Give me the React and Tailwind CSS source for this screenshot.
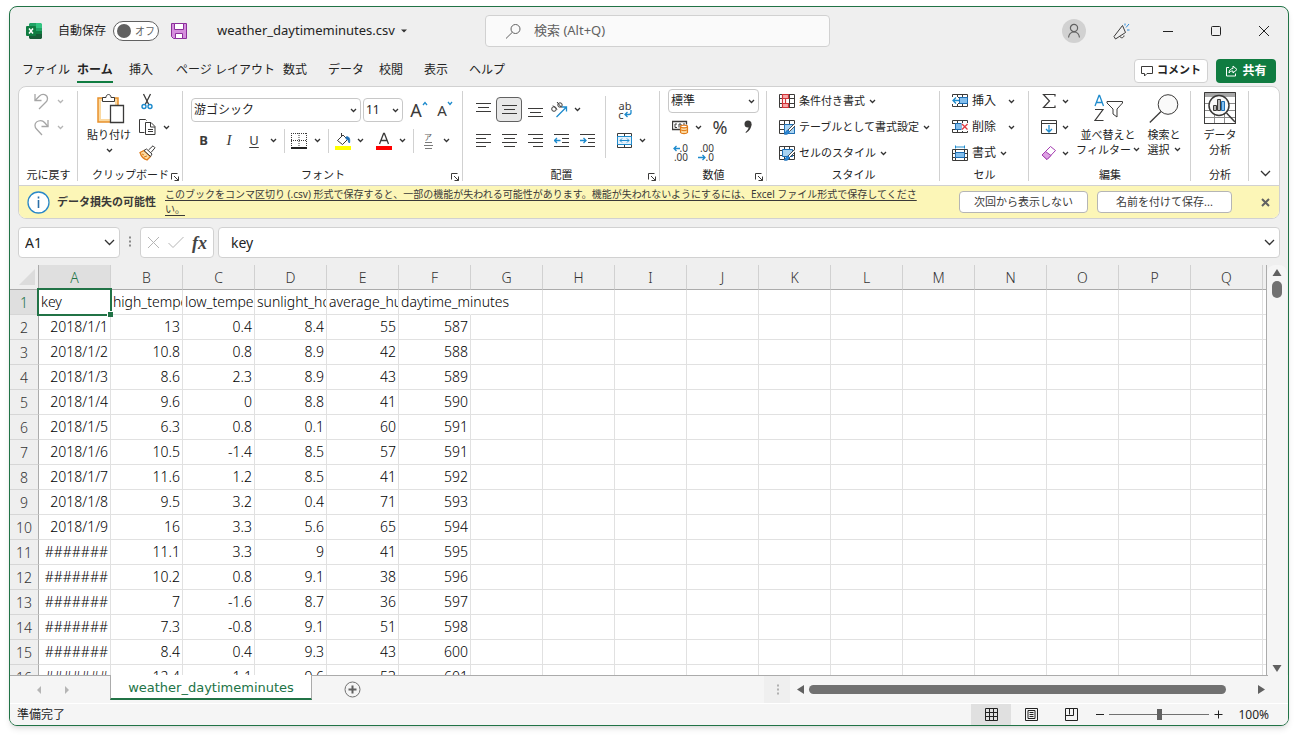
import React, { useState } from "react";
import clsx from "clsx";

const COLUMNS = "ABCDEFGHIJKLMNOPQ".split("");

const ROWS = [
  ["key", "high_temperature", "low_temperature", "sunlight_hours", "average_humidity", "daytime_minutes"],
  ["2018/1/1", "13", "0.4", "8.4", "55", "587"],
  ["2018/1/2", "10.8", "0.8", "8.9", "42", "588"],
  ["2018/1/3", "8.6", "2.3", "8.9", "43", "589"],
  ["2018/1/4", "9.6", "0", "8.8", "41", "590"],
  ["2018/1/5", "6.3", "0.8", "0.1", "60", "591"],
  ["2018/1/6", "10.5", "-1.4", "8.5", "57", "591"],
  ["2018/1/7", "11.6", "1.2", "8.5", "41", "592"],
  ["2018/1/8", "9.5", "3.2", "0.4", "71", "593"],
  ["2018/1/9", "16", "3.3", "5.6", "65", "594"],
  ["#######", "11.1", "3.3", "9", "41", "595"],
  ["#######", "10.2", "0.8", "9.1", "38", "596"],
  ["#######", "7", "-1.6", "8.7", "36", "597"],
  ["#######", "7.3", "-0.8", "9.1", "51", "598"],
  ["#######", "8.4", "0.4", "9.3", "43", "600"],
  ["#######", "12.4", "1.1", "9.6", "53", "601"],
];

const Icon = ({ w = 16, h = 16, className, children }) => (
  <svg
    width={w}
    height={h}
    viewBox={`0 0 ${w} ${h}`}
    fill="none"
    stroke="#3b3a39"
    className={clsx("shrink-0", className)}
    aria-hidden="true"
  >
    {children}
  </svg>
);

const Chevron = ({ className, color = "#333" }) => (
  <Icon w={7} h={5} className={className}>
    <path d="M1 1l2.5 2.5L6 1" stroke={color} strokeWidth="1.3" />
  </Icon>
);

const ChevronLarge = ({ className }) => (
  <Icon w={11} h={7} className={className}>
    <path d="M1 1l4.5 4.5L10 1" stroke="#333" strokeWidth="1.3" />
  </Icon>
);

const Btn = ({ label, className, children }) => (
  <button type="button" aria-label={label} className={clsx("flex shrink-0 items-center justify-center", className)}>
    {children}
  </button>
);

const More = ({ label, color, className }) => (
  <Btn label={label} className={clsx("h-5 w-[14px]", className)}>
    <Chevron color={color} />
  </Btn>
);

const Divider = () => <div className="mx-1 h-6 w-px shrink-0 bg-[#d1d1d1]" />;

/* ---------- title bar ---------- */

const ExcelLogo = () => (
  <Icon w={16} h={16} className="ml-4">
    <g stroke="none">
      <path d="M4 0h6v5H3V1z" fill="#21a366" />
      <path d="M10 0h5l1 1v4h-6z" fill="#33c481" />
      <path d="M3 5h7v6H3z" fill="#107c41" />
      <path d="M10 5h6v3h-6z" fill="#21a366" />
      <path d="M10 8h6v3h-6z" fill="#107c41" />
      <path d="M3 11h13v4l-1 1H4l-1-1z" fill="#185c37" />
      <rect x="0" y="3" width="10" height="10" rx="1" fill="#107c41" />
    </g>
    <path d="M3 5.5l4 5M7 5.5l-4 5" stroke="#fff" strokeWidth="1.5" />
  </Icon>
);

const TitleBar = () => {
  const [autoSave, setAutoSave] = useState(false);

  return (
    <header className="flex h-[48px] shrink-0 items-center">
      <div className="flex w-[475px] shrink-0 items-center">
        <ExcelLogo />
        <label className="ml-4 flex items-center gap-[7px] text-xs">
          自動保存
          <input
            type="checkbox"
            className="sr-only"
            checked={autoSave}
            onChange={(e) => setAutoSave(e.target.checked)}
          />
          <span className="flex h-5 w-[46px] items-center gap-1 rounded-full border border-[#616161] bg-white px-[3px]">
            <span className="h-[14px] w-[14px] shrink-0 rounded-full bg-[#616161]" />
            <span className="whitespace-nowrap text-[10px] leading-none text-[#616161]">オフ</span>
          </span>
        </label>
        <Btn label="上書き保存" className="ml-3">
          <Icon>
            <path d="M.5.5h15v15H2.5l-2-2z" fill="#d58fdd" stroke="#8b2f9b" />
            <path d="M3.5.5h9v6h-9z" fill="#fff" stroke="#8b2f9b" />
            <path d="M4.5 10.5h7v5h-7z" fill="#fff" stroke="#8b2f9b" />
          </Icon>
        </Btn>
        <button type="button" className="ml-[30px] flex items-center gap-[6px] text-[13px]">
          weather_daytimeminutes.csv
          <Icon w={6} h={4}>
            <path d="M0 .5h6L3 3.5z" fill="#333" stroke="none" />
          </Icon>
        </button>
      </div>
      <label className="flex h-8 w-[345px] items-center gap-3 rounded border border-[#d1d1d1] bg-[#fafafa] pl-[19px]">
        <Icon w={17} h={17}>
          <circle cx="10.5" cy="6" r="4.5" stroke="#616161" />
          <path d="M7.3 9.3L1 15.5" stroke="#616161" />
        </Icon>
        <input
          aria-label="検索"
          placeholder="検索 (Alt+Q)"
          className="min-w-0 flex-1 bg-transparent text-[13px] outline-none placeholder:text-[#616161]"
        />
      </label>
      <div className="ml-auto flex items-center pr-[18px]">
        <Btn label="アカウント" className="h-6 w-6 rounded-full bg-[#d1d1d1]">
          <Icon w={14} h={16}>
            <circle cx="7" cy="5" r="3.6" stroke="#616161" strokeWidth="1.2" />
            <path d="M1.5 14.5c.5-3.5 2.5-5.5 5.5-5.5s5 2 5.5 5.5" stroke="#616161" strokeWidth="1.2" />
          </Icon>
        </Btn>
        <Btn label="近日公開の機能" className="ml-[27px]">
          <Icon w={17} h={17}>
            <path d="M9.5 2.5L1 13.5l1.5 2.5 10-6.5z" strokeLinejoin="round" />
            <path d="M7 13.5c.5 2 4 1.5 4-1" />
            <path d="M12 2.5V.5M13 4.5l3-3.5M14 7h2.5" stroke="#2b88d8" />
          </Icon>
        </Btn>
        <Btn label="最小化" className="ml-8">
          <Icon w={12} h={12}>
            <path d="M1 6.5h10" stroke="#222" />
          </Icon>
        </Btn>
        <Btn label="最大化" className="ml-9">
          <Icon w={12} h={12}>
            <rect x="1.5" y="1.5" width="9" height="9" rx="1" stroke="#222" />
          </Icon>
        </Btn>
        <Btn label="閉じる" className="ml-9">
          <Icon w={12} h={12}>
            <path d="M1 1l10 10M11 1L1 11" stroke="#222" />
          </Icon>
        </Btn>
      </div>
    </header>
  );
};

/* ---------- tabs ---------- */

const TABS = [
  { name: "ファイル", width: "w-[55px]" },
  { name: "ホーム", width: "w-[52px]", active: true },
  { name: "挿入", width: "w-[47px]" },
  { name: "ページ レイアウト", width: "w-[107px]" },
  { name: "数式", width: "w-[45px]" },
  { name: "データ", width: "w-[51px]" },
  { name: "校閲", width: "w-[45px]" },
  { name: "表示", width: "w-[45px]" },
  { name: "ヘルプ", width: "w-[45px]" },
];

const TabBar = () => (
  <nav className="flex h-[31px] shrink-0 items-center px-3">
    {TABS.map((tab) => (
      <div key={tab.name} className={clsx("flex shrink-0", tab.width)}>
        <button
          type="button"
          className={clsx(
            "h-6 whitespace-nowrap border-b-2 pt-px text-xs",
            tab.active ? "border-[#107c41] font-bold" : "border-transparent"
          )}
        >
          {tab.name}
        </button>
      </div>
    ))}
    <button
      type="button"
      className="ml-auto flex h-6 w-[74px] items-center justify-center gap-1 rounded border border-[#d1d1d1] bg-white text-[11px] font-bold"
    >
      <Icon w={12} h={12}>
        <path d="M.5 1.5h11v7H6L3.5 11V8.5h-3z" />
      </Icon>
      コメント
    </button>
    <button
      type="button"
      className="ml-2 flex h-6 w-[60px] items-center justify-center gap-1 rounded bg-[#107c41] text-xs font-bold text-white"
    >
      <Icon w={13} h={13}>
        <path d="M4 3.5H1.5V12h9V9.5" stroke="#fff" />
        <path d="M4 9c0-3 2-4.5 4-4.5V2l4 3.5L8 9V7C6 7 5 7.5 4 9z" stroke="#fff" />
      </Icon>
      共有
    </button>
  </nav>
);

/* ---------- ribbon ---------- */

const Launcher = ({ label }) => (
  <Btn label={label} className="absolute bottom-[3px] right-[3px]">
    <Icon w={10} h={10}>
      <path d="M1.5 7.5v-6h6M4 4l4.5 4.5M8.5 4.5v4h-4" />
    </Icon>
  </Btn>
);

const Group = ({ title, width, launcher, children }) => (
  <section className={clsx("relative flex shrink-0 flex-col pt-px", width)}>
    <div className="absolute bottom-1 right-0 top-1 w-px bg-[#d1d1d1]" />
    <div className="flex h-[78px]">{children}</div>
    <h2 className="flex h-[18px] items-center justify-center text-[11px]">{title}</h2>
    {launcher && <Launcher label={`${title}の設定`} />}
  </section>
);

const Lines = ({ rows }) => (
  <Icon w={15} h={15}>
    {rows.map(([x1, x2, y]) => (
      <path key={y} d={`M${x1} ${y}.5H${x2}`} />
    ))}
  </Icon>
);

const UndoGroup = () => (
  <Group title="元に戻す" width="w-[59px]">
    <div className="flex flex-col pl-[14px]">
      <div className="flex h-[26px] items-center gap-[3px]">
        <Btn label="元に戻す">
          <Icon w={17} h={17}>
            <path d="M2 1v6.500h6.500" stroke="#a6a6a6" strokeWidth="1.3" />
            <path d="M2 7.500L6.500 3c3-3 8-1.500 8 2.500 0 1.500-.5 2.500-1.500 3.500L6 16" stroke="#a6a6a6" strokeWidth="1.3" />
          </Icon>
        </Btn>
        <More label="元に戻す履歴" color="#b5b5b5" />
      </div>
      <div className="flex h-[26px] items-center gap-[3px]">
        <Btn label="やり直し">
          <Icon w={17} h={17}>
            <path d="M15 1v6.500H8.500" stroke="#a6a6a6" strokeWidth="1.3" />
            <path d="M15 7.500L11.500 3.500c-3-3.500-9.500-1.500-9.500 3 0 1.500.5 2.500 1.500 3.500L9 16" stroke="#a6a6a6" strokeWidth="1.3" />
          </Icon>
        </Btn>
        <More label="やり直し履歴" color="#b5b5b5" />
      </div>
    </div>
  </Group>
);

const ClipboardGroup = () => (
  <Group title="クリップボード" width="w-[105px]" launcher>
    <button type="button" className="ml-[9px] flex w-11 flex-col items-center pt-[5px] text-[11px] leading-[15px]">
      <Icon w={30} h={32} className="ml-1">
        <path d="M2 5h20v24H2z" fill="#fbd9a0" stroke="#e8912d" strokeWidth="1.5" />
        <path d="M5 8h14v18H5z" fill="#fff" stroke="none" />
        <path d="M6.500 8.500v-4h3.500c0-4 5-4 5 0h3.500v4z" fill="#fff" />
        <path d="M14.500 12.500h13v17h-13z" fill="#fff" strokeWidth="1.3" />
      </Icon>
      <span className="mt-[2px] whitespace-nowrap">貼り付け</span>
      <Chevron className="mt-[6px]" />
    </button>
    <div className="ml-2 flex flex-col">
      <div className="flex h-[26px] items-center">
        <Btn label="切り取り" className="w-4">
          <Icon w={14} h={17}>
            <path d="M3.500 1l5.500 11M10.500 1L5 12" strokeWidth="1.3" />
            <circle cx="4" cy="13.500" r="2" stroke="#1e8bcd" strokeWidth="1.4" />
            <circle cx="10" cy="13.500" r="2" stroke="#1e8bcd" strokeWidth="1.4" />
          </Icon>
        </Btn>
      </div>
      <div className="flex h-[26px] items-center gap-[3px]">
        <Btn label="コピー">
          <Icon w={17} h={16}>
            <path d="M5.500 13.500h-5V.5h6l1 1" />
            <path d="M6.500 3.500H12l4 4v8H6.500z" fill="#fff" />
            <path d="M11.500 3.500V8H16M9 10.500h5M9 12.500h5" />
          </Icon>
        </Btn>
        <More label="コピーのオプション" />
      </div>
      <div className="flex h-[26px] items-center">
        <Btn label="書式のコピー">
          <Icon w={17} h={16}>
            <path d="M1 7.500l4-2 6.500 6L8 15c-3-1-6-4-7-7.500z" fill="#fbd9a0" stroke="#e07b1a" strokeWidth="1.3" />
            <path d="M3 9l2 1M5 12l3-1" stroke="#e07b1a" />
            <path d="M5 5.500L7.500 4l5.500 5-1.500 2.500zM9.500 5L14 .8l2 2L12 7.500" fill="#fff" />
          </Icon>
        </Btn>
      </div>
    </div>
  </Group>
);

const SelectBox = ({ label, value, className }) => (
  <div className={clsx("relative flex h-6 shrink-0 items-center rounded border border-[#c8c8c8] bg-white", className)}>
    <select aria-label={label} className="h-full w-full appearance-none bg-transparent pl-[2px] text-xs outline-none">
      <option>{value}</option>
    </select>
    <Chevron className="pointer-events-none absolute right-[3px] top-[9px]" />
  </div>
);

const FontGroup = () => (
  <Group title="フォント" width="w-[280px]" launcher>
    <div className="flex flex-col pl-2 pt-[6px]">
      <div className="flex h-[31px] items-center">
        <SelectBox label="フォント名" value="游ゴシック" className="w-[170px]" />
        <SelectBox label="フォント サイズ" value="11" className="ml-[2px] w-10" />
        <Btn label="フォント サイズの拡大" className="ml-[6px] w-5 items-start text-lg leading-5 text-[#3b3a39]">
          A
          <Icon w={6} h={5} className="mt-px">
            <path d="M1 4l2-2.500L5 4" stroke="#1e8bcd" strokeWidth="1.3" />
          </Icon>
        </Btn>
        <Btn label="フォント サイズの縮小" className="ml-[6px] w-5 items-start text-[15px] leading-5 text-[#3b3a39]">
          A
          <Icon w={6} h={5} className="mt-px">
            <path d="M1 1l2 2.500L5 1" stroke="#1e8bcd" strokeWidth="1.3" />
          </Icon>
        </Btn>
      </div>
      <div className="flex h-[31px] items-center text-[13px] text-[#3b3a39]">
        <Btn label="太字" className="w-[25px] font-bold">B</Btn>
        <Btn label="斜体" className="w-[26px] font-['Liberation_Serif',serif] text-[15px] italic">I</Btn>
        <Btn label="下線" className="w-6 underline underline-offset-2">U</Btn>
        <More label="下線の種類" />
        <Divider />
        <Btn label="罫線" className="w-5">
          <Icon>
            <path d="M0 .5h16M0 7.500h16M.5 0v15M8 0v15M15.500 0v15" strokeDasharray="1 1" />
            <path d="M0 15h16" strokeWidth="2" stroke="#222" />
          </Icon>
        </Btn>
        <More label="罫線の種類" className="ml-px" />
        <Divider />
        <Btn label="塗りつぶしの色" className="w-5">
          <Icon w={17} h={18}>
            <path d="M2.500 8.500L8 3l4.500 4.500-5 5zM6.500 1v4" strokeLinejoin="round" />
            <path d="M11 5c2.500-1 4.500 1 3.500 6l-1-1c0-2-1-3-2.500-3z" fill="#1e6fb5" stroke="#1e6fb5" strokeWidth=".8" />
            <path d="M0 14h16v4H0z" fill="#ff0" stroke="none" />
          </Icon>
        </Btn>
        <More label="塗りつぶしの色の選択" />
        <Btn label="フォントの色" className="ml-[7px] w-5">
          <Icon w={16} h={18}>
            <path d="M3.500 12L7.600 1.500h.8L12.500 12M5 8.500h6" strokeWidth="1.3" />
            <path d="M0 14h16v4H0z" fill="#f00" stroke="none" />
          </Icon>
        </Btn>
        <More label="フォントの色の選択" className="ml-px" />
        <Divider />
        <Btn label="ふりがな" className="w-5 flex-col text-[8px] leading-[9px] text-[#616161]">
          <span className="font-['Noto_Sans_CJK_JP',sans-serif]">ア</span>
          <Icon w={9} h={8}>
            <path d="M1 1.500h7M0 4.500h9M1 7.500h7" stroke="#7a7a7a" />
          </Icon>
        </Btn>
        <More label="ふりがなの設定" className="ml-px" />
      </div>
    </div>
  </Group>
);

const AlignGroup = () => (
  <Group title="配置" width="w-[197px]" launcher>
    <div className="flex w-[136px] flex-col pl-[7px] pt-[6px]">
      <div className="flex h-[31px] items-center">
        <Btn label="上揃え" className="w-[26px]">
          <Lines rows={[[0, 15, 1], [2, 13, 5], [0, 15, 9]]} />
        </Btn>
        <Btn label="上下中央揃え" className="h-[25px] w-[26px] rounded border border-[#616161] bg-[#e8e8e8]">
          <Lines rows={[[0, 15, 3], [2, 13, 7], [0, 15, 11]]} />
        </Btn>
        <Btn label="下揃え" className="w-[26px]">
          <Lines rows={[[0, 15, 6], [2, 13, 10], [0, 15, 14]]} />
        </Btn>
        <Btn label="方向" className="w-[22px]">
          <Icon w={18} h={18}>
            <path d="M6.500 16L16 6.500M12 6h4.500v4.500" stroke="#1e8bcd" strokeWidth="1.3" />
            <circle cx="4" cy="8" r="2.300" />
            <path d="M3 4.500l4 4M7 1l4.500 5.500" />
            <circle cx="10" cy="4" r="2.200" />
          </Icon>
        </Btn>
        <More label="方向の選択" />
      </div>
      <div className="flex h-[31px] items-center">
        <Btn label="左揃え" className="w-[26px]">
          <Lines rows={[[0, 15, 1], [0, 10, 5], [0, 15, 9], [0, 10, 13]]} />
        </Btn>
        <Btn label="中央揃え" className="w-[26px]">
          <Lines rows={[[0, 15, 1], [2, 13, 5], [0, 15, 9], [2, 13, 13]]} />
        </Btn>
        <Btn label="右揃え" className="w-[26px]">
          <Lines rows={[[0, 15, 1], [5, 15, 5], [0, 15, 9], [5, 15, 13]]} />
        </Btn>
        <Btn label="インデントを減らす" className="w-[26px]">
          <Icon w={15} h={15}>
            <path d="M0 1.500h15M8 5.500h7M8 9.500h7M0 13.500h15" />
            <path d="M6.500 7.500h-6M3 5L.5 7.500 3 10" stroke="#1e8bcd" strokeWidth="1.3" />
          </Icon>
        </Btn>
        <Btn label="インデントを増やす" className="w-[26px]">
          <Icon w={15} h={15}>
            <path d="M0 1.500h15M8 5.500h7M8 9.500h7M0 13.500h15" />
            <path d="M0 7.500h6M3.500 5L6 7.500 3.500 10" stroke="#1e8bcd" strokeWidth="1.3" />
          </Icon>
        </Btn>
      </div>
    </div>
    <div className="ml-[6px] mt-2 h-[62px] w-px bg-[#d1d1d1]" />
    <div className="flex flex-col pl-[7px] pt-[6px]">
      <div className="flex h-[31px] items-center">
        <Btn label="折り返して全体を表示する" className="w-6 flex-col text-[11px] leading-[9px] text-[#3b3a39]">
          <span>ab</span>
          <span className="flex items-center">
            c
            <Icon w={8} h={8}>
              <path d="M7 0v2.500c0 1.500-1 2-2 2H1M3.500 2L1 4.500 3.500 7" stroke="#1e8bcd" strokeWidth="1.3" />
            </Icon>
          </span>
        </Btn>
      </div>
      <div className="flex h-[31px] items-center">
        <Btn label="セルを結合して中央揃え" className="w-[22px]">
          <Icon w={15} h={15}>
            <path d="M.5.5h14v14H.5zM7.500 0v3M7.500 12v3" />
            <path d="M.5 3.500h14v8H.5z" fill="#e5f1fb" stroke="#1e8bcd" />
            <path d="M3 7.500h9M5 5.500l-2 2 2 2M10 5.500l2 2-2 2" stroke="#1e8bcd" />
          </Icon>
        </Btn>
        <More label="結合の種類" />
      </div>
    </div>
  </Group>
);

const NumberGroup = () => (
  <Group title="数値" width="w-[107px]" launcher>
    <div className="flex flex-col pl-2">
      <div className="flex h-[26px] items-center">
        <SelectBox label="表示形式" value="標準" className="w-[91px]" />
      </div>
      <div className="flex h-[26px] items-center">
        <Btn label="通貨表示形式" className="ml-1">
          <Icon w={17} h={16}>
            <path d="M8 10.500H.5v-8h14v3" strokeWidth="1.3" />
            <path d="M5 5H3v3.500h2M7 8.500V5h2v3M11 5h2" />
            <path d="M8.500 7.500v6c1 1.500 6 1.500 7 0v-6" fill="#fbd9a0" stroke="#e07b1a" strokeWidth="1.2" />
            <ellipse cx="12" cy="7.500" rx="3.500" ry="1.300" fill="#fff" stroke="#e07b1a" strokeWidth="1.2" />
            <path d="M8.500 10.500c1 1.500 6 1.500 7 0" stroke="#e07b1a" />
          </Icon>
        </Btn>
        <More label="通貨の選択" className="ml-[2px]" />
        <Btn label="パーセント スタイル" className="ml-[3px] w-6 text-lg leading-none text-[#3b3a39]">%</Btn>
        <Btn label="桁区切りスタイル" className="ml-3">
          <Icon w={9} h={14}>
            <circle cx="4" cy="4" r="3.500" fill="#3b3a39" stroke="none" />
            <path d="M7.500 4c0 4-2 7-5.500 9l-.5-.8C4 10 5 8 4.500 6z" fill="#3b3a39" stroke="none" />
          </Icon>
        </Btn>
      </div>
      <div className="flex h-[26px] items-center gap-[10px] pl-1 text-[10px] leading-[9px] text-[#3b3a39]">
        <Btn label="小数点以下の表示桁数を増やす" className="w-4 flex-col items-end">
          <span className="flex items-center">
            <Icon w={7} h={7}>
              <path d="M7 3.500H1M3.500 1L1 3.500 3.500 6" stroke="#1e8bcd" strokeWidth="1.3" />
            </Icon>
            .0
          </span>
          <span>.00</span>
        </Btn>
        <Btn label="小数点以下の表示桁数を減らす" className="w-4 flex-col items-end">
          <span>.00</span>
          <span className="flex items-center">
            <Icon w={8} h={7}>
              <path d="M0 3.500h7M4.500 1L7 3.500 4.500 6" stroke="#1e8bcd" strokeWidth="1.3" />
            </Icon>
            .0
          </span>
        </Btn>
      </div>
    </div>
  </Group>
);

const Table16 = ({ children }) => (
  <Icon>
    <path d="M.5 1.500h15v13H.5zM.5 5.500h15M.5 10.500h15M5.500 1.500v13M10.500 1.500v13" />
    {children}
  </Icon>
);

const Brush = () => (
  <>
    <path d="M15.500 4.500L9 11l1.500 1.500L16 7" fill="#fff" strokeWidth=".9" />
    <path d="M9 11c-2 0-2 3-4 4 2 1 5 0 5.500-2.500z" fill="#2b88d8" stroke="#1e6fb5" strokeWidth=".8" />
  </>
);

const StylesGroup = () => (
  <Group title="スタイル" width="w-[173px]">
    <div className="flex flex-col pl-3 text-[11px]">
      <button type="button" className="flex h-[26px] items-center whitespace-nowrap">
        <Table16>
          <path d="M3.500 1.500h6v4h-6zM3.500 10.500h6v4h-6z" fill="#f7a8a8" stroke="#d13438" strokeWidth="1.2" />
          <path d="M3.500 5.500h3v5h-3z" fill="#fff" stroke="#d13438" strokeWidth="1.2" />
        </Table16>
        <span className="ml-1">条件付き書式</span>
        <Chevron className="ml-1" />
      </button>
      <button type="button" className="flex h-[26px] items-center whitespace-nowrap">
        <Table16>
          <path d="M5.500 5.500h10v9h-10z" fill="#a9d3f2" stroke="#1e6fb5" />
          <Brush />
        </Table16>
        <span className="ml-1">テーブルとして書式設定</span>
        <Chevron className="ml-1" />
      </button>
      <button type="button" className="flex h-[26px] items-center whitespace-nowrap">
        <Table16>
          <path d="M3.500 4.500h10v7h-10z" fill="#a9d3f2" stroke="#1e6fb5" />
          <Brush />
        </Table16>
        <span className="ml-1">セルのスタイル</span>
        <Chevron className="ml-1" />
      </button>
    </div>
  </Group>
);

const CellsGroup = () => (
  <Group title="セル" width="w-[89px]">
    <div className="flex flex-col pl-3 text-xs">
      <button type="button" className="flex h-[26px] items-center">
        <Icon>
          <path d="M.5 4V1.500h15v12H.5V11M5.500 1.500v3M10.500 1.500v12M5.500 10.500v3M.5 4.500h15M.5 10.500h15" />
          <path d="M7.500 4.500h8v6h-8z" fill="#83beec" stroke="#1e6fb5" />
          <path d="M0 4h6v7H0z" fill="#fff" stroke="none" />
          <path d="M7 7.500H1M4 4.500l-3 3 3 3" stroke="#1e8bcd" strokeWidth="1.3" />
        </Icon>
        <span className="ml-1">挿入</span>
        <Chevron className="ml-3" />
      </button>
      <button type="button" className="flex h-[26px] items-center">
        <Icon>
          <path d="M.5 5V1.500h15V4M5.500 1.500v3M10.500 1.500v3M.5 10v3.500h15V12M5.500 10.500v3M10.500 10.500v3M.5 4.500h15M.5 10.500h15" />
          <path d="M3.500 4.500h6v6h-6z" fill="#83beec" stroke="#1e6fb5" />
          <path d="M9.500 4h7v8h-7z" fill="#fff" stroke="none" />
          <path d="M10 5l5.500 5.500M15.500 5L10 10.500" stroke="#e0393e" strokeWidth="1.3" />
        </Icon>
        <span className="ml-1">削除</span>
        <Chevron className="ml-3" />
      </button>
      <button type="button" className="flex h-[26px] items-center">
        <Icon>
          <path d="M.5 4.500h15v11H.5zM.5 8.500h15M.5 12.500h15M3.500 4.500v11M12.500 4.500v11" />
          <path d="M3.500 7.500h9v5h-9z" fill="#83beec" stroke="#1e6fb5" />
          <path d="M3.500 2h9M3.500.5v3M12.500.5v3" stroke="#1e8bcd" />
        </Icon>
        <span className="ml-1">書式</span>
        <Chevron className="ml-1" />
      </button>
    </div>
  </Group>
);

const EditGroup = () => (
  <Group title="編集" width="w-[162px]">
    <div className="flex flex-col pl-3">
      <div className="flex h-[26px] items-center">
        <Btn label="オート SUM">
          <Icon w={17} h={16}>
            <path d="M14 3.500v-2H2.500L8.500 8l-6 6.500H14v-2" strokeWidth="1.2" />
          </Icon>
        </Btn>
        <More label="集計方法" />
      </div>
      <div className="flex h-[26px] items-center">
        <Btn label="フィル">
          <Icon w={17} h={15}>
            <path d="M.5.5h15v13H.5zM.5 3.500h15" />
            <path d="M8 5v7M5 9l3 3 3-3" stroke="#1e8bcd" strokeWidth="1.3" />
          </Icon>
        </Btn>
        <More label="フィルの種類" />
      </div>
      <div className="flex h-[26px] items-center">
        <Btn label="クリア">
          <Icon w={17} h={16}>
            <path d="M9.500 1.500l5 4-8.500 9-5-4.500z" fill="#fff" stroke="#a33bb0" />
            <path d="M4.500 6.500l5.500 4-4 4-5-4.500z" fill="#dda3e3" stroke="#a33bb0" />
          </Icon>
        </Btn>
        <More label="クリアの種類" />
      </div>
    </div>
    <button type="button" className="ml-[3px] flex w-[66px] flex-col items-center whitespace-nowrap pt-[6px] text-[11px] leading-[15px]">
      <Icon w={31} h={31}>
        <path d="M2 12L6 1.500h.6L10.500 12M3.500 8.500h6" stroke="#1e8bcd" strokeWidth="1.3" />
        <path d="M2 15.500h8L2 26.500h8.500" strokeWidth="1.2" />
        <path d="M14 7.500h15.500V9L24 15v8l-4-3v-5l-6-6z" fill="#fff" />
      </Icon>
      <span className="mt-[2px]">並べ替えと</span>
      <span className="flex items-center gap-[2px]">
        フィルター
        <Chevron />
      </span>
    </button>
    <button type="button" className="flex w-[46px] flex-col items-center whitespace-nowrap pt-[6px] text-[11px] leading-[15px]">
      <Icon w={31} h={31}>
        <circle cx="19" cy="10.500" r="9.800" fill="#fafafa" />
        <path d="M12 17.500L.8 28.500" strokeWidth="1.3" />
      </Icon>
      <span className="mt-[2px]">検索と</span>
      <span className="flex items-center gap-1">
        選択
        <Chevron />
      </span>
    </button>
  </Group>
);

const AnalysisGroup = () => (
  <Group title="分析" width="w-[58px]">
    <button type="button" className="flex w-full flex-col items-center pt-1 text-[11px] leading-[15px]">
      <Icon w={32} h={32}>
        <path d="M.5.5h31v31H.5z" fill="#fff" />
        <path d="M0 0h32v5H0z" fill="#a8a8a8" stroke="none" />
        <path d="M0 11.500h32M0 18.500h32M0 25.500h32M10.500 5v27M20.500 5v27" stroke="#8a8a8a" />
        <path d="M.5.5h31v31H.5z" />
        <circle cx="15" cy="13.500" r="10" fill="#fafafa" strokeWidth="1.5" />
        <path d="M9.500 13.500h3v5h-3zM13.500 7.500h3v11h-3z" fill="#b5b5b5" />
        <path d="M17.500 9.500h3v9h-3z" fill="#83beec" stroke="#1e6fb5" />
        <path d="M22.500 21L31 30" strokeWidth="1.5" />
      </Icon>
      <span className="mt-[3px]">データ</span>
      <span>分析</span>
    </button>
  </Group>
);

const MessageBar = () => (
  <div className="flex h-[33px] items-center border-t border-[#d1d1d1] bg-[#fcf6b7] px-2 text-[#3b3a39]">
    <Icon w={23} h={23}>
      <circle cx="11.500" cy="11.500" r="10.500" fill="#fff" stroke="#2b88c8" strokeWidth="1.3" />
      <path d="M11.500 9v8M11.500 5.500v2" stroke="#2b6fa8" strokeWidth="1.6" />
    </Icon>
    <strong className="ml-[7px] shrink-0 text-[11px]">データ損失の可能性</strong>
    <a href="#save" className="ml-[9px] min-w-0 flex-1 text-[10px] leading-[15px] underline underline-offset-2">
      このブックをコンマ区切り (.csv) 形式で保存すると、一部の機能が失われる可能性があります。機能が失われないようにするには、Excel ファイル形式で保存してください。
    </a>
    <button type="button" className="ml-8 h-[22px] w-[129px] shrink-0 rounded border border-[#b5b5b5] bg-white text-[11px]">
      次回から表示しない
    </button>
    <button type="button" className="ml-[9px] h-[22px] w-[135px] shrink-0 rounded border border-[#b5b5b5] bg-white text-[11px]">
      名前を付けて保存...
    </button>
    <Btn label="メッセージを閉じる" className="ml-[29px] mr-px">
      <Icon w={9} h={9}>
        <path d="M1 1l7 7M8 1L1 8" stroke="#616161" strokeWidth="2" />
      </Icon>
    </Btn>
  </div>
);

const Ribbon = () => (
  <div className="mx-2 shrink-0 overflow-hidden rounded-lg border border-[#d1d1d1] bg-white">
    <div className="flex h-[98px]">
      <UndoGroup />
      <ClipboardGroup />
      <FontGroup />
      <AlignGroup />
      <NumberGroup />
      <StylesGroup />
      <CellsGroup />
      <EditGroup />
      <AnalysisGroup />
      <Btn label="リボンを折りたたむ" className="ml-auto mr-2 self-end pb-2">
        <ChevronLarge />
      </Btn>
    </div>
    <MessageBar />
  </div>
);

/* ---------- formula bar ---------- */

const FormulaBar = () => (
  <div className="mx-2 mb-[7px] mt-2 flex h-[31px] shrink-0 text-sm">
    <div className="flex w-[102px] items-center rounded border border-[#d1d1d1] bg-white pr-1">
      <input aria-label="名前ボックス" defaultValue="A1" className="min-w-0 flex-1 bg-transparent pl-[6px] outline-none" />
      <ChevronLarge />
    </div>
    <Icon w={20} h={31}>
      <path d="M9 10.500h2M9 14.500h2M9 18.500h2" stroke="#8a8a8a" strokeWidth="2" />
    </Icon>
    <div className="flex w-[74px] items-center justify-between rounded border border-[#d1d1d1] bg-white px-[6px]">
      <Btn label="キャンセル">
        <Icon w={13} h={13}>
          <path d="M1 1l11 11M12 1L1 12" stroke="#b5b5b5" />
        </Icon>
      </Btn>
      <Btn label="入力">
        <Icon w={16} h={13}>
          <path d="M.5 7L5 11.500 15.500 1" stroke="#b5b5b5" />
        </Icon>
      </Btn>
      <Btn label="関数の挿入" className="font-['Liberation_Serif',serif] text-lg font-bold italic leading-none text-[#444]">
        fx
      </Btn>
    </div>
    <div className="ml-1 flex min-w-0 flex-1 items-center rounded border border-[#d1d1d1] bg-white pr-1">
      <input aria-label="数式バー" defaultValue="key" className="min-w-0 flex-1 bg-transparent pl-3 outline-none" />
      <ChevronLarge />
    </div>
  </div>
);

/* ---------- sheet ---------- */

const Cell = ({ row, col, value }) => {
  const selected = row === 0 && col === 0;
  const spills = row === 0 && col === 5;

  return (
    <td className={clsx("relative h-[25px] border-b border-r border-[#e1e1e1] p-0", spills && "border-r-white")}>
      {value && (
        <div
          className={clsx(
            "h-6 whitespace-nowrap leading-[23px]",
            row === 0 ? "pl-[2px]" : "pr-[2px] text-right",
            !spills && "overflow-hidden"
          )}
        >
          {value}
        </div>
      )}
      {selected && (
        <div className="absolute -bottom-[2px] -left-[2px] -right-[2px] -top-[2px] z-10 border-2 border-[#217346]">
          <div className="absolute -bottom-[3px] -right-[3px] h-[6px] w-[6px] border-l border-t border-white bg-[#217346]" />
        </div>
      )}
    </td>
  );
};

const Sheet = () => (
  <div className="flex min-h-0 flex-1">
    <div className="min-w-0 flex-1 overflow-hidden border-r border-[#ababab] bg-[#efefef]">
      <table className="w-full table-fixed border-separate border-spacing-0 bg-white font-['Noto_Sans',sans-serif] text-[14px] font-light text-black">
        <colgroup>
          <col className="w-[29px]" />
          {COLUMNS.map((c) => (
            <col key={c} className="w-[72px]" />
          ))}
          <col />
        </colgroup>
        <thead>
          <tr className="bg-[#efefef] text-[#333]">
            <th className="h-[25px] border-b border-r border-[#ababab] p-0" aria-label="すべて選択">
              <Icon w={16} h={16} className="ml-[9px]">
                <path d="M16 0v16H0z" fill="#dcdcdc" stroke="none" />
              </Icon>
            </th>
            {COLUMNS.map((c, i) => (
              <th
                key={c}
                className={clsx(
                  "h-[25px] border-b border-r border-b-[#ababab] border-r-[#d1d1d1] p-0 font-light leading-[23px]",
                  i === 0 && "bg-[#dfdfdf] text-[#217346]"
                )}
              >
                {c}
              </th>
            ))}
            <td className="border-b border-[#ababab]" />
          </tr>
        </thead>
        <tbody>
          {ROWS.map((row, r) => (
            <tr key={r}>
              <th
                className={clsx(
                  "h-[25px] border-b border-r border-b-[#d6d6d6] border-r-[#ababab] p-0 font-light leading-[23px]",
                  r === 0 ? "bg-[#dfdfdf] text-[#217346]" : "bg-[#efefef] text-[#333]"
                )}
              >
                {r + 1}
              </th>
              {COLUMNS.map((c, i) => (
                <Cell key={c} row={r} col={i} value={row[i]} />
              ))}
              <td className="border-b border-[#e1e1e1]" />
            </tr>
          ))}
        </tbody>
      </table>
    </div>
    <div className="mr-px flex w-5 shrink-0 flex-col items-center rounded-t-lg bg-[#f5f5f5] pb-[2px] pt-1">
      <Icon w={10} h={8}>
        <path d="M5 0l4.500 7h-9z" fill="#616161" stroke="none" />
      </Icon>
      <div className="mt-1 h-[17px] w-[10px] rounded-full bg-[#717171]" />
      <Icon w={10} h={8} className="mt-auto">
        <path d="M.5 0h9L5 7z" fill="#616161" stroke="none" />
      </Icon>
    </div>
  </div>
);

const SheetTabs = () => (
  <div className="flex h-[29px] shrink-0 border-b border-white bg-[#f5f5f5]">
    <div className="flex w-[100px] items-center gap-[22px] border-t border-[#ababab] pl-[26px]">
      <Btn label="前のシート">
        <Icon w={6} h={8}>
          <path d="M5 0v8L1 4z" fill="#b5b5b5" stroke="none" />
        </Icon>
      </Btn>
      <Btn label="次のシート">
        <Icon w={6} h={8}>
          <path d="M1 0v8l4-4z" fill="#b5b5b5" stroke="none" />
        </Icon>
      </Btn>
    </div>
    <button
      type="button"
      className="mb-[3px] w-[202px] border-b-2 border-l border-r border-b-[#217346] border-l-[#ababab] border-r-[#ababab] bg-white pt-[2px] font-['DejaVu_Sans',sans-serif] text-[13px] text-[#217346]"
    >
      weather_daytimeminutes
    </button>
    <div className="flex flex-1 items-center border-t border-[#ababab]">
      <Btn label="新しいシート" className="ml-8">
        <Icon w={17} h={17}>
          <circle cx="8.500" cy="8.500" r="7.500" stroke="#717171" />
          <path d="M4.500 8.500h8M8.500 4.500v8" stroke="#616161" strokeWidth="2" />
        </Icon>
      </Btn>
    </div>
    <div className="flex w-[504px] items-center border-t border-[#ababab]">
      <Icon w={26} h={27} className="bg-[#efefef]">
        <path d="M13 9.500h2M13 13.500h2M13 17.500h2" stroke="#b0b0b0" strokeWidth="2" />
      </Icon>
      <Icon w={7} h={9} className="ml-[7px]">
        <path d="M7 0v9L0 4.500z" fill="#616161" stroke="none" />
      </Icon>
      <div className="ml-[5px] mr-8 h-[9px] flex-1 rounded-full bg-[#717171]" />
      <Icon w={7} h={9} className="mr-[3px]">
        <path d="M0 0v9l7-4.500z" fill="#616161" stroke="none" />
      </Icon>
    </div>
    <div className="w-5" />
  </div>
);

const StatusBar = () => (
  <footer className="flex h-[21px] shrink-0 items-center bg-[#f5f5f5] pl-[7px] pr-[19px] text-xs">
    <span>準備完了</span>
    <div className="ml-auto flex h-full items-center">
      <Btn label="標準" className="h-full w-10 bg-[#e0e0e0]">
        <Icon w={13} h={13}>
          <path d="M.5.5h12v12H.5zM.5 4.500h12M.5 8.500h12M4.500.5v12M8.500.5v12" stroke="#222" />
        </Icon>
      </Btn>
      <Btn label="ページ レイアウト" className="h-full w-10">
        <Icon w={13} h={13}>
          <path d="M.5.5h12v12H.5zM3 2.500h7v8H3zM4.500 4.500h4M4.500 6.500h4M4.500 8.500h4" stroke="#222" />
        </Icon>
      </Btn>
      <Btn label="改ページ プレビュー" className="h-full w-10">
        <Icon w={13} h={13}>
          <path d="M.5.5h12v12H.5zM4.500.5v6M8.500.5v6M.5 7.500h8v-7" stroke="#222" />
        </Icon>
      </Btn>
      <Btn label="縮小" className="ml-1">
        <Icon w={9} h={9}>
          <path d="M1 4.500h8" stroke="#222" />
        </Icon>
      </Btn>
      <input
        type="range"
        aria-label="ズーム"
        defaultValue={50}
        className="mx-[5px] h-[11px] w-[100px] appearance-none bg-transparent [&::-webkit-slider-runnable-track]:h-px [&::-webkit-slider-runnable-track]:bg-[#717171] [&::-webkit-slider-thumb]:-mt-[5px] [&::-webkit-slider-thumb]:h-[11px] [&::-webkit-slider-thumb]:w-[5px] [&::-webkit-slider-thumb]:appearance-none [&::-webkit-slider-thumb]:bg-[#616161]"
      />
      <Btn label="拡大">
        <Icon w={9} h={9}>
          <path d="M.5 4.500h8M4.500.5v8" stroke="#222" />
        </Icon>
      </Btn>
      <span className="w-[46px] text-right">100%</span>
    </div>
  </footer>
);

const App = () => (
  <div className="flex h-screen flex-col bg-white px-[9px] pb-3 pt-[6px] font-['Noto_Sans','Noto_Sans_CJK_JP',sans-serif] text-[#242424]">
    <div className="flex min-h-0 flex-1 flex-col overflow-hidden rounded-lg border border-[#217346] bg-[#efefef] shadow-md">
      <TitleBar />
      <TabBar />
      <Ribbon />
      <FormulaBar />
      <Sheet />
      <SheetTabs />
      <StatusBar />
    </div>
  </div>
);

export default App;
